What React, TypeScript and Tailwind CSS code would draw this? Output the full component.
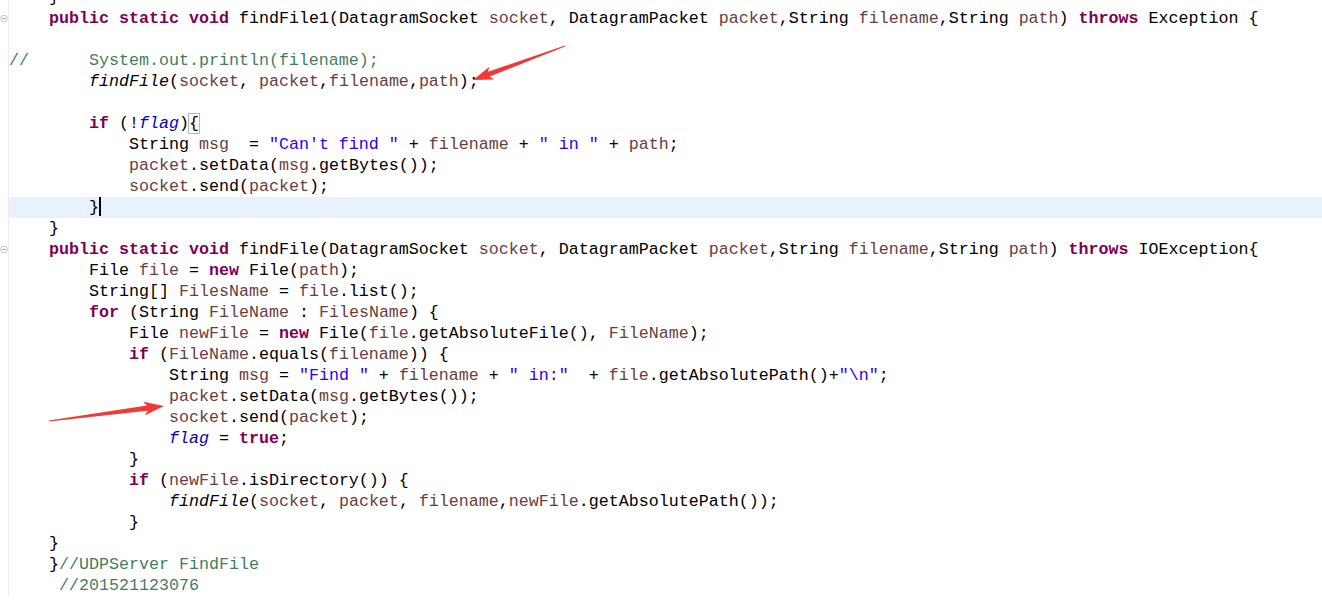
import React from 'react';

type Tok = [string, string?];

// eclipse default java colours
const KW = 'font-bold text-[#7f0055]';
const VAR = 'text-[#6a3e3e]';
const STR = 'text-[#2a00ff]';
const CMT = 'not-italic text-[#3f7f5f]';
const STATIC = 'italic';
const FIELD = 'italic text-[#0000c0]';

const lines: { toks: Tok[]; fold?: boolean; current?: boolean }[] = [
  { toks: [['    }']] },
  {
    fold: true,
    toks: [
      ['    '], ['public', KW], [' '], ['static', KW], [' '], ['void', KW],
      [' findFile1(DatagramSocket '], ['socket', VAR], [', DatagramPacket '], ['packet', VAR],
      [',String '], ['filename', VAR], [',String '], ['path', VAR], [') '], ['throws', KW],
      [' Exception {'],
    ],
  },
  { toks: [] },
  { toks: [['//      System.out.println(filename);', CMT]] },
  {
    toks: [
      ['        '], ['findFile', STATIC], ['('], ['socket', VAR], [', '], ['packet', VAR], [','],
      ['filename', VAR], [','], ['path', VAR], [');'],
    ],
  },
  { toks: [] },
  {
    toks: [['        '], ['if', KW], [' (!'], ['flag', FIELD], [')'], ['{', 'BOX']],
  },
  {
    toks: [
      ['            String '], ['msg', VAR], ['  = '], ['"Can\'t find "', STR], [' + '],
      ['filename', VAR], [' + '], ['" in "', STR], [' + '], ['path', VAR], [';'],
    ],
  },
  { toks: [['            '], ['packet', VAR], ['.setData('], ['msg', VAR], ['.getBytes());']] },
  { toks: [['            '], ['socket', VAR], ['.send('], ['packet', VAR], [');']] },
  { current: true, toks: [['        }'], ['', 'CARET']] },
  { toks: [['    }']] },
  {
    fold: true,
    toks: [
      ['    '], ['public', KW], [' '], ['static', KW], [' '], ['void', KW],
      [' findFile(DatagramSocket '], ['socket', VAR], [', DatagramPacket '], ['packet', VAR],
      [',String '], ['filename', VAR], [',String '], ['path', VAR], [') '], ['throws', KW],
      [' IOException{'],
    ],
  },
  { toks: [['        File '], ['file', VAR], [' = '], ['new', KW], [' File('], ['path', VAR], [');']] },
  { toks: [['        String[] '], ['FilesName', VAR], [' = '], ['file', VAR], ['.list();']] },
  {
    toks: [
      ['        '], ['for', KW], [' (String '], ['FileName', VAR], [' : '], ['FilesName', VAR], [') {'],
    ],
  },
  {
    toks: [
      ['            File '], ['newFile', VAR], [' = '], ['new', KW], [' File('], ['file', VAR],
      ['.getAbsoluteFile(), '], ['FileName', VAR], [');'],
    ],
  },
  {
    toks: [['            '], ['if', KW], [' ('], ['FileName', VAR], ['.equals('], ['filename', VAR], [')) {']],
  },
  {
    toks: [
      ['                String '], ['msg', VAR], [' = '], ['"Find "', STR], [' + '], ['filename', VAR],
      [' + '], ['" in:"', STR], ['  + '], ['file', VAR], ['.getAbsolutePath()+'], ['"\\n"', STR], [';'],
    ],
  },
  { toks: [['                '], ['packet', VAR], ['.setData('], ['msg', VAR], ['.getBytes());']] },
  { toks: [['                '], ['socket', VAR], ['.send('], ['packet', VAR], [');']] },
  { toks: [['                '], ['flag', FIELD], [' = '], ['true', KW], [';']] },
  { toks: [['            }']] },
  {
    toks: [['            '], ['if', KW], [' ('], ['newFile', VAR], ['.isDirectory()) {']],
  },
  {
    toks: [
      ['                '], ['findFile', STATIC], ['('], ['socket', VAR], [', '], ['packet', VAR], [', '],
      ['filename', VAR], [','], ['newFile', VAR], ['.getAbsolutePath());'],
    ],
  },
  { toks: [['            }']] },
  { toks: [['    }']] },
  { toks: [['    }'], ['//UDPServer FindFile', CMT]] },
  { toks: [['     '], ['//201521123076', CMT]] },
];

function FoldIcon() {
  return (
    <svg width="9" height="9" viewBox="0 0 9 9" className="block">
      <circle cx="4.5" cy="4.5" r="3.8" fill="#fff" stroke="#b4b9c2" strokeWidth="0.9" />
      <line x1="2.6" y1="4.5" x2="6.4" y2="4.5" stroke="#8a8f99" strokeWidth="1" />
    </svg>
  );
}

// screenshot-tool style arrow: thin tail, widening shaft, barbed head
function arrowPoints(x1: number, y1: number, x2: number, y2: number) {
  const dx = x2 - x1;
  const dy = y2 - y1;
  const len = Math.hypot(dx, dy);
  const ux = dx / len;
  const uy = dy / len;
  const nx = -uy;
  const ny = ux;
  const head = 17;
  const bx = x2 - ux * head;
  const by = y2 - uy * head;
  const wx = x2 - ux * (head + 3);
  const wy = y2 - uy * (head + 3);
  const p = (x: number, y: number) => `${x.toFixed(1)},${y.toFixed(1)}`;
  return [
    p(x1 + nx * 0.4, y1 + ny * 0.4),
    p(bx + nx * 2.6, by + ny * 2.6),
    p(wx + nx * 6.8, wy + ny * 6.8),
    p(x2, y2),
    p(wx - nx * 6.8, wy - ny * 6.8),
    p(bx - nx * 2.6, by - ny * 2.6),
    p(x1 - nx * 0.4, y1 - ny * 0.4),
  ].join(' ');
}

function Line({ toks, fold, current }: { toks: Tok[]; fold?: boolean; current?: boolean }) {
  return (
    <div className="flex h-[21px]">
      <div className="w-[9px] shrink-0 flex items-center border-r border-[#ececec]">
        {fold && <FoldIcon />}
      </div>
      <div className={`flex-1 whitespace-pre ${current ? 'bg-[#e8f2fe]' : ''}`}>
        {toks.map(([text, cls], i) => {
          if (cls === 'BOX')
            return (
              <span key={i} className="outline outline-1 outline-[#b8b8b8]">
                {text}
              </span>
            );
          if (cls === 'CARET')
            return <span key={i} className="inline-block w-[2px] h-[19px] bg-black align-[-4px]" />;
          return (
            <span key={i} className={cls}>
              {text}
            </span>
          );
        })}
      </div>
    </div>
  );
}

export default function App() {
  return (
    <div className="relative w-[1322px] h-[603px] overflow-hidden bg-white text-black font-['Liberation_Mono','Courier_New',monospace] text-[16.667px] leading-[21px]">
      <div className="mt-[-13px]">
        {lines.map((l, i) => (
          <Line key={i} {...l} />
        ))}
      </div>

      {/* red annotation arrows */}
      <svg className="absolute inset-0 pointer-events-none" width="1322" height="603">
        <polygon points={arrowPoints(565, 46, 473, 80)} fill="#f03a3a" />
        <polygon points={arrowPoints(49, 421, 164, 406)} fill="#f03a3a" />
      </svg>
    </div>
  );
}
